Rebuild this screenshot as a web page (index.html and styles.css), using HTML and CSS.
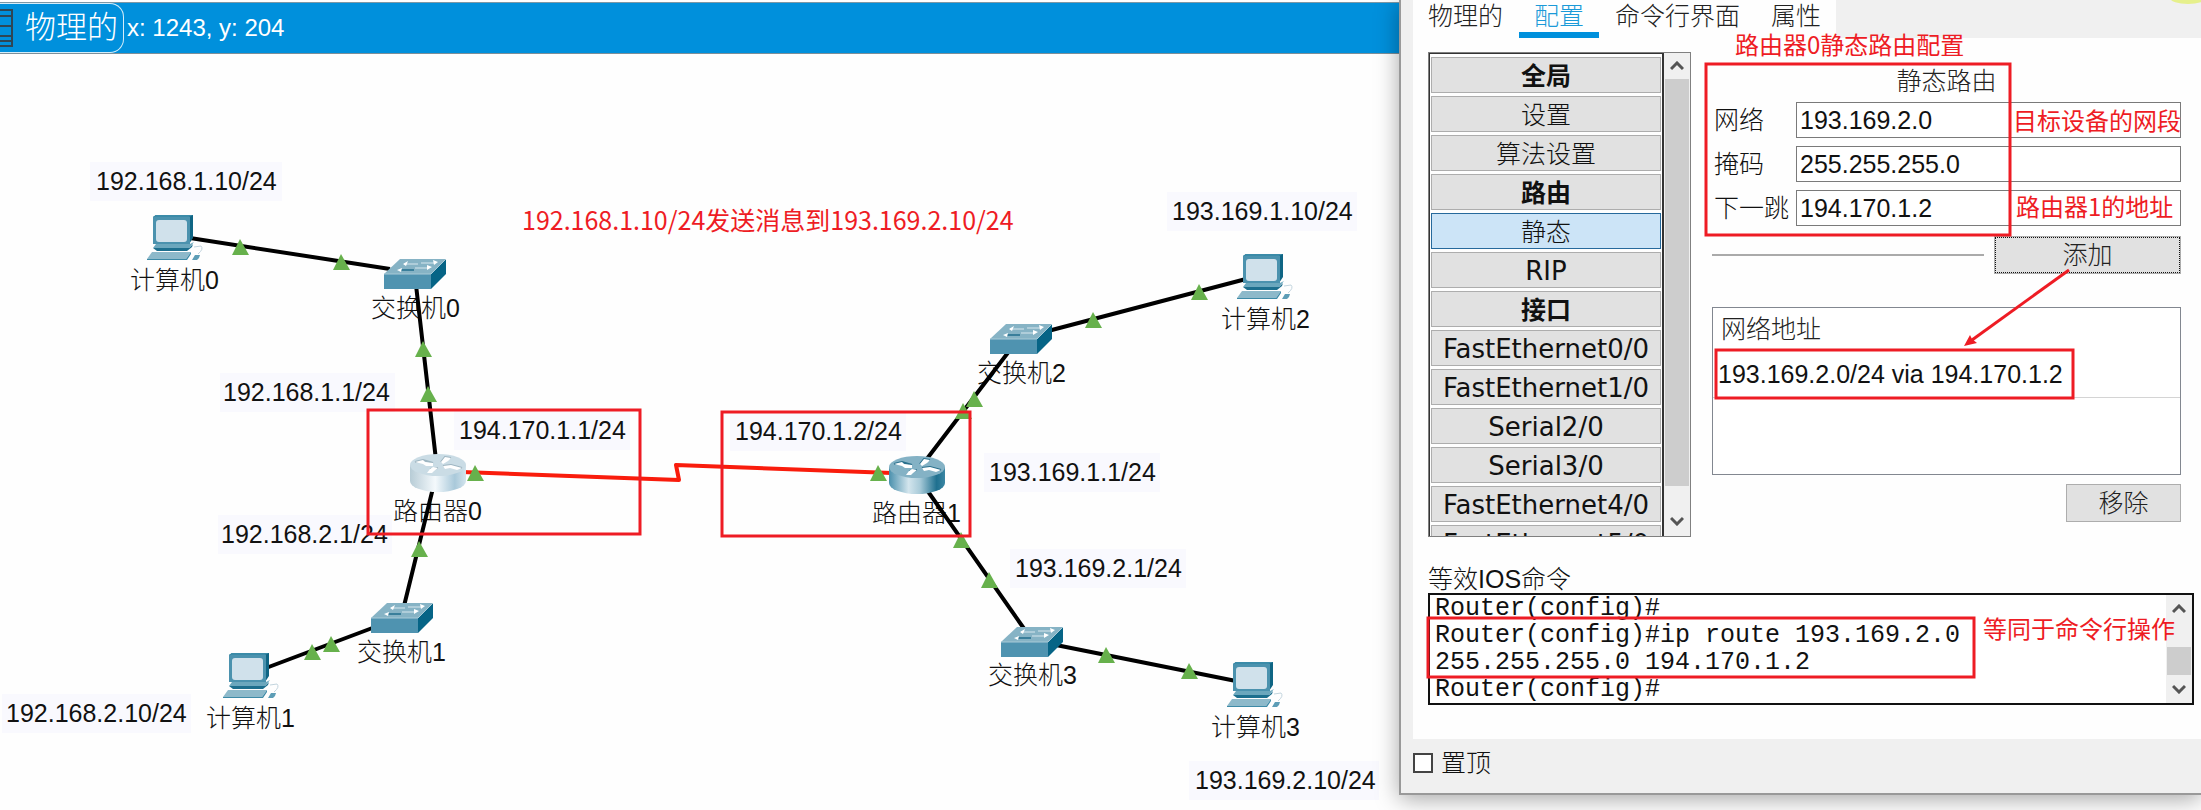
FILE: index.html
```html
<!DOCTYPE html>
<html lang="zh-CN">
<head>
<meta charset="utf-8">
<title>静态路由配置</title>
<link rel="stylesheet" href="styles.css">
</head>
<body>
<div class="desktop">
  <main class="workspace">
    <header class="topbar">
      <button class="view-toggle" type="button">
        <svg class="rack" width="14" height="40" viewBox="0 0 14 40" aria-hidden="true">
          <path d="M0 2H12V38H0M0 8H12M0 18H12M0 28H12M0 33H12" fill="none" stroke="#2f4654" stroke-width="2"/>
        </svg>
        <span>物理的</span>
      </button>
      <span class="coords">x: 1243, y: 204</span>
    </header>

    <svg class="topology" width="1399" height="756" viewBox="0 54 1399 756">
      <defs>
        <linearGradient id="r-dark" x1="0" x2="1" y1="0" y2="0">
          <stop offset="0" stop-color="#4a90ad"/><stop offset=".35" stop-color="#d3e5ed"/>
          <stop offset=".55" stop-color="#a9cbd9"/><stop offset=".85" stop-color="#1f708f"/><stop offset="1" stop-color="#3b86a3"/>
        </linearGradient>
        <linearGradient id="r-light" x1="0" x2="1" y1="0" y2="0">
          <stop offset="0" stop-color="#b7ccd6"/><stop offset=".45" stop-color="#f4f9fc"/>
          <stop offset=".8" stop-color="#a9c9da"/><stop offset="1" stop-color="#d3e4ed"/>
        </linearGradient>
        <g id="pc">
          <path d="M6 2 9 0H46V23L42 29V2Z" fill="#0f6584"/>
          <path d="M6 2 9 0H46L42 2Z" fill="#3b8ba8"/>
          <path d="M6 2H43V29H6Z" fill="#4b92ae"/>
          <rect x="9" y="5" width="31" height="22" rx="3" fill="#d0e1eb"/>
          <path d="M9 29H43L47 27 42 33H6Z" fill="#6ba7bd"/>
          <path d="M6 33H42L46 29 45 32 40 36H10Z" fill="#1d6f8e"/>
          <path d="M5 37H44L39 44H0Z" fill="#8db9ca"/>
          <path d="M0 44H39L44 37V39L40 45H0Z" fill="#3d8aa7"/>
          <path d="M47 32 54 31Q57 34 51 39" fill="none" stroke="#c3d5de"/>
          <path d="M48 40H53L52 43 50 45H45Z" fill="#5d9db6"/>
        </g>
        <g id="switch">
          <path d="M0 15 16 0H62L47 15Z" fill="#86b3c5"/>
          <path d="M0 15H47V30H0Z" fill="#4f93b0"/>
          <path d="M47 15 62 0V15L47 30Z" fill="#066486"/>
          <path d="M0 15H47L62 0" fill="none" stroke="#a9cad7"/>
          <path d="M20 5H34M37 4H50M31 9H43" fill="none" stroke="#d7e7ee"/>
          <path d="M17 11H30" fill="none" stroke="#3a7f9b" stroke-width="2"/>
          <path d="M19 5 24 2 22 7ZM54 3 49 1 50 6ZM13 11 18 9 17 13ZM48 8 43 6 43 11Z" fill="#fff"/>
        </g>
        <g id="router-marks">
          <path d="M5 8 13 6 15 8 23 9 23 12 16 12 13 10ZM31 8 35 3 41 4 38 7 33 10ZM33 12 41 11 52 14 47 16 40 14 35 15ZM17 19 20 15 23 13 28 14 24 17 22 19Z" fill="#fff"/>
        </g>
        <path id="up" d="M0-16 9 0H-8Z" fill="#67b14c"/>
      </defs>

      <g class="plate">
        <rect x="90" y="162" width="192" height="39"/>
        <rect x="220" y="373" width="175" height="39"/>
        <rect x="454" y="411" width="176" height="39"/>
        <rect x="218" y="515" width="174" height="39"/>
        <rect x="2" y="694" width="189" height="39"/>
        <rect x="730" y="412" width="176" height="39"/>
        <rect x="984" y="453" width="176" height="39"/>
        <rect x="1010" y="549" width="176" height="39"/>
        <rect x="1167" y="192" width="190" height="39"/>
        <rect x="1189" y="761" width="190" height="39"/>
      </g>
      <g class="label">
        <text x="96" y="190">192.168.1.10/24</text>
        <text x="223" y="401">192.168.1.1/24</text>
        <text x="459" y="439">194.170.1.1/24</text>
        <text x="221" y="543">192.168.2.1/24</text>
        <text x="6" y="722">192.168.2.10/24</text>
        <text x="735" y="440">194.170.1.2/24</text>
        <text x="989" y="481">193.169.1.1/24</text>
        <text x="1015" y="577">193.169.2.1/24</text>
        <text x="1172" y="220">193.169.1.10/24</text>
        <text x="1195" y="789">193.169.2.10/24</text>
        <text x="130" y="289">计算机0</text>
        <text x="371" y="317">交换机0</text>
        <text x="393" y="520">路由器0</text>
        <text x="357" y="661">交换机1</text>
        <text x="206" y="727">计算机1</text>
        <text x="872" y="522">路由器1</text>
        <text x="977" y="382">交换机2</text>
        <text x="1221" y="328">计算机2</text>
        <text x="988" y="684">交换机3</text>
        <text x="1211" y="736">计算机3</text>
      </g>

      <path class="cable" d="M190 238 390 269M416 285 436 460M433 488 404 606M375 627 266 668M926 460 1010 350M1048 331 1246 279M927 490 1025 630M1056 645 1236 681"/>
      <path class="serial" d="M462 472 679 480 676 465 892 473"/>

      <use href="#pc" x="147" y="215"/>
      <use href="#pc" x="223" y="653"/>
      <use href="#pc" x="1237" y="254"/>
      <use href="#pc" x="1227" y="662"/>
      <use href="#switch" x="384" y="259"/>
      <use href="#switch" x="371" y="603"/>
      <use href="#switch" x="990" y="324"/>
      <use href="#switch" x="1001" y="627"/>
      <g transform="translate(410 454)">
        <path d="M0 11V27A28 11 0 0 0 56 27V11Z" fill="url(#r-light)"/>
        <ellipse cx="28" cy="11" rx="28" ry="11" fill="#cadce5"/>
        <path d="M5 8 13 6 23 9M31 8 35 3 41 4M33 12 41 11 52 14M20 15 28 14" fill="none" stroke="#9db5c1" stroke-width="2"/>
        <use href="#router-marks"/>
      </g>
      <g transform="translate(889 456)">
        <path d="M0 11V27A28 11 0 0 0 56 27V11Z" fill="url(#r-dark)"/>
        <ellipse cx="28" cy="11" rx="28" ry="11" fill="#84b2c5"/>
        <path d="M5 8 13 6 23 9M31 8 35 3 41 4M33 12 41 11 52 14M20 15 28 14" fill="none" stroke="#286f8c" stroke-width="2"/>
        <use href="#router-marks"/>
      </g>

      <use href="#up" x="240" y="255"/><use href="#up" x="341" y="270"/>
      <use href="#up" x="423" y="357"/><use href="#up" x="428" y="402"/>
      <use href="#up" x="475" y="481"/><use href="#up" x="419" y="557"/>
      <use href="#up" x="312" y="660"/><use href="#up" x="331" y="652"/>
      <use href="#up" x="963" y="419"/><use href="#up" x="974" y="407"/>
      <use href="#up" x="878" y="481"/><use href="#up" x="961" y="548"/>
      <use href="#up" x="989" y="588"/><use href="#up" x="1093" y="328"/>
      <use href="#up" x="1199" y="300"/><use href="#up" x="1106" y="663"/>
      <use href="#up" x="1189" y="679"/>

      <g class="mark">
        <rect x="368" y="410" width="272" height="124"/>
        <rect x="722" y="412" width="248" height="124"/>
        <text class="mark-title" x="522" y="230">192.168.1.10/24发送消息到193.169.2.10/24</text>
      </g>
    </svg>
  </main>

  <section class="window">
    <nav class="tabs">
      <a class="tab" href="#physical">物理的</a>
      <a class="tab tab-active" href="#config">配置</a>
      <a class="tab" href="#cli">命令行界面</a>
      <a class="tab" href="#attributes">属性</a>
    </nav>

    <div class="sheet">
      <div class="config">
        <div class="menu-frame">
          <div class="menu">
            <button class="item heading" type="button">全局</button>
            <button class="item" type="button">设置</button>
            <button class="item" type="button">算法设置</button>
            <button class="item heading" type="button">路由</button>
            <button class="item selected" type="button">静态</button>
            <button class="item port" type="button">RIP</button>
            <button class="item heading" type="button">接口</button>
            <button class="item port" type="button">FastEthernet0/0</button>
            <button class="item port" type="button">FastEthernet1/0</button>
            <button class="item port" type="button">Serial2/0</button>
            <button class="item port" type="button">Serial3/0</button>
            <button class="item port" type="button">FastEthernet4/0</button>
            <button class="item port" type="button">FastEthernet5/0</button>
          </div>
          <div class="scrollbar">
            <button class="arrow" type="button" aria-label="向上滚动"><svg width="14" height="10" viewBox="0 0 14 10"><path d="M1 8 7 2 13 8"/></svg></button>
            <div class="thumb"></div>
            <button class="arrow arrow-down" type="button" aria-label="向下滚动"><svg width="14" height="10" viewBox="0 0 14 10"><path d="M1 2 7 8 13 2"/></svg></button>
          </div>
        </div>

        <form class="routes">
          <h1 class="title">静态路由</h1>
          <div class="fields">
            <label for="network">网络</label><input id="network" type="text" value="193.169.2.0">
            <label for="mask">掩码</label><input id="mask" type="text" value="255.255.255.0">
            <label for="hop">下一跳</label><input id="hop" type="text" value="194.170.1.2">
          </div>
          <div class="add-row">
            <hr class="rule">
            <button class="btn btn-add" type="button">添加</button>
          </div>
          <div class="table-box">
            <table class="table">
              <thead><tr><th>网络地址</th></tr></thead>
              <tbody><tr><td>193.169.2.0/24 via 194.170.1.2</td></tr></tbody>
            </table>
          </div>
          <button class="btn btn-remove" type="button">移除</button>
        </form>
      </div>

      <label class="console-label" for="console">等效IOS命令</label>
      <div class="console">
        <textarea id="console" class="console-text" rows="4" readonly>Router(config)#
Router(config)#ip route 193.169.2.0
255.255.255.0 194.170.1.2
Router(config)#</textarea>
        <div class="scrollbar console-scroll">
          <button class="arrow" type="button" aria-label="向上滚动"><svg width="14" height="10" viewBox="0 0 14 10"><path d="M1 8 7 2 13 8"/></svg></button>
          <div class="thumb"></div>
          <button class="arrow" type="button" aria-label="向下滚动"><svg width="14" height="10" viewBox="0 0 14 10"><path d="M1 2 7 8 13 2"/></svg></button>
        </div>
      </div>
    </div>

    <footer class="footer">
      <input id="pin" class="check" type="checkbox"><label for="pin">置顶</label>
    </footer>

    <svg class="overlay" width="800" height="795" viewBox="1401 0 800 795">
      <ellipse cx="2188" cy="-2" rx="18" ry="6" fill="#e6f08c"/>
      <g class="mark">
        <rect x="1706" y="64" width="304" height="171"/>
        <rect x="1716" y="350" width="357" height="48"/>
        <rect x="1428" y="618" width="546" height="59"/>
        <path class="mark-line" d="M2069 270 1972 340"/>
        <path d="M1964 346 1970 335 1972 339 1977 343Z" fill="#ee1c24"/>
        <text x="1735" y="54">路由器0静态路由配置</text>
        <text x="2013" y="130">目标设备的网段</text>
        <text x="2016" y="216">路由器1的地址</text>
        <text x="1983" y="638">等同于命令行操作</text>
      </g>
    </svg>
  </section>
</div>
</body>
</html>
```
FILE: styles.css
```css
* { box-sizing: border-box; }

body {
  margin: 0;
  background: #fefefe;
  color: #111;
  font: 300 25px/28px "Liberation Sans", "Noto Sans CJK SC", sans-serif;
}

button, input, textarea { font: inherit; color: inherit; margin: 0; }

.desktop {
  display: grid;
  grid-template-columns: minmax(0, 1399fr) minmax(0, 802fr);
  align-items: start;
  min-height: 100vh;
  overflow: hidden;
}

/* Workspace */
.workspace { padding-top: 2px; min-width: 0; }

.topbar {
  display: flex;
  align-items: center;
  height: 52px;
  background: #0090dc;
  border-top: 1px solid #7d98a6;
  border-bottom: 1px solid #7d8f99;
  color: #fff;
  font-size: 24px;
}

.view-toggle {
  display: flex;
  align-items: center;
  gap: 11px;
  height: 50px;
  width: 124px;
  padding: 0;
  background: none;
  border: 1px solid #d5edf9;
  border-left: 0;
  border-radius: 0 14px 14px 0;
  color: #fff;
  font-size: 31px;
  white-space: nowrap;
}

.rack { flex: none; }
.coords { padding-left: 3px; }

.topology { display: block; }
.plate { fill: #f9f9fe; }
.label { fill: #111; font-size: 25px; }
.cable { fill: none; stroke: #000; stroke-width: 4; }
.serial { fill: none; stroke: #f91c0c; stroke-width: 4; stroke-linejoin: round; }

.mark text { fill: #ee1c24; font: 24px "Noto Sans CJK SC", sans-serif; }
.mark .mark-title { font-size: 25px; }
.mark rect, .mark-line { fill: none; stroke: #ee1c24; stroke-width: 3; }

/* Configuration window */
.window {
  position: relative;
  padding-left: 12px;
  background: #f0f0f0;
  border-left: 2px solid #999;
  border-bottom: 2px solid #999;
  box-shadow: 0 4px 22px rgba(0, 0, 0, .35);
}

.overlay { position: absolute; left: 0; top: 0; pointer-events: none; }

.tabs {
  display: flex;
  gap: 1px;
  width: max-content;
  background: #fefefe;
}

.tab {
  height: 38px;
  padding: 4px 15px 0;
  border-bottom: 6px solid transparent;
  color: #222;
  line-height: 24px;
  text-decoration: none;
}

.tab-active { color: #1b9ad8; border-color: #0090dc; }

.sheet { padding: 14px 7px 34px 15px; background: #fefefe; }

.config { display: flex; gap: 21px; padding-right: 13px; }

.menu-frame {
  display: flex;
  flex: none;
  width: 263px;
  height: 485px;
  border: 1px solid #808080;
}

.menu {
  display: flex;
  flex: 1;
  flex-direction: column;
  gap: 3px;
  padding: 3px 1px 0;
  overflow: hidden;
  border: solid #333;
  border-width: 1px 2px 0 1px;
}

.item {
  flex: none;
  height: 36px;
  padding: 2px 0 0;
  background: #e1e1e1;
  border: 1px solid #adadad;
}

.port { font-family: "DejaVu Sans", sans-serif; font-size: 26px; font-weight: 400; }
.heading { font-weight: 700; }
.selected { background: #cce4f7; border-color: #26699c; }

.scrollbar {
  display: flex;
  flex-direction: column;
  width: 26px;
  padding: 0 1px;
  background: #f0f0f0;
}

.arrow {
  display: flex;
  flex: none;
  align-items: center;
  justify-content: center;
  height: 26px;
  padding: 0;
  background: #f0f0f0;
  border: 0;
}

.arrow-down { height: 50px; padding-top: 20px; }
.arrow path { fill: none; stroke: #555; stroke-width: 3; }
.thumb { flex: 1; background: #cdcdcd; }

.routes { flex: 1; min-width: 0; display: flex; flex-direction: column; }

.title {
  margin: 0;
  padding-top: 8px;
  color: #222;
  font-size: 25px;
  font-weight: 300;
  line-height: 42px;
  text-align: center;
}

.fields {
  display: grid;
  grid-template-columns: 82px minmax(0, 1fr);
  row-gap: 8px;
  align-items: center;
  padding-left: 2px;
}

.fields input {
  width: 100%;
  height: 36px;
  padding: 0 3px;
  background: #fff;
  border: 1px solid #7a7a7a;
  border-radius: 0;
}

.add-row { display: flex; align-items: center; gap: 10px; margin-top: 10px; }
.rule { flex: 1; margin: 0; border: 0; border-top: 2px solid #aaa; }

.btn {
  height: 38px;
  padding: 0;
  background: #e1e1e1;
  border: 1px solid #adadad;
  color: #222;
}

.btn-add { width: 187px; outline: 1px dotted #111; outline-offset: -2px; }
.btn-remove { width: 115px; margin-top: 9px; align-self: flex-end; }

.table-box { height: 168px; margin-top: 33px; background: #fff; border: 1px solid #828790; }
.table { width: 100%; border-collapse: collapse; }
.table th { height: 42px; padding: 0 8px; color: #222; font-weight: 300; text-align: left; }
.table td { height: 47px; padding: 2px 5px 0; border-bottom: 1px solid #d4d4d4; }

.console-label { display: block; margin-top: 28px; }

.console { display: flex; border: 2px solid #111; background: #fff; }

.console-text {
  display: block;
  flex: 1;
  min-width: 0;
  height: 108px;
  padding: 0 5px;
  border: 0;
  background: none;
  resize: none;
  overflow: hidden;
  font-family: "Liberation Mono", monospace;
  line-height: 27px;
}

.console-scroll .arrow:first-child { height: 52px; padding-bottom: 24px; }
.console-scroll .arrow:last-child { height: 28px; }

.footer { display: flex; align-items: center; gap: 8px; padding: 8px 0 14px; line-height: 32px; }

.check {
  width: 20px;
  height: 20px;
  appearance: none;
  background: #fff;
  border: 2px solid #444;
}
```
